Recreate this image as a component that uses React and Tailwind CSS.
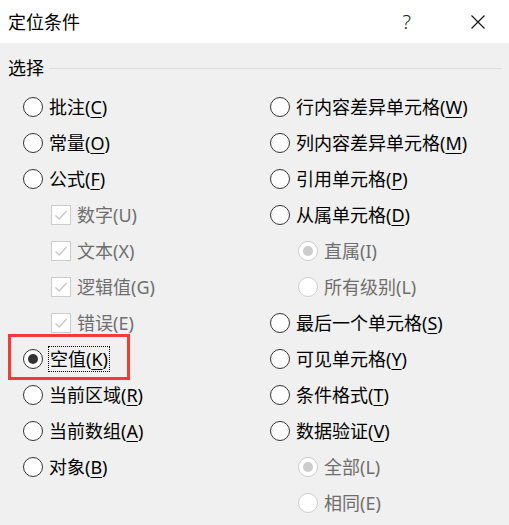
import React from "react";

const FONT = { fontFamily: '"Noto Sans", "Noto Sans CJK SC", sans-serif' };

function Radio({ checked, disabled }) {
  return (
    <span
      className={`flex h-[20px] w-[20px] shrink-0 items-center justify-center rounded-full border-[1.5px] bg-white ${
        disabled ? "border-[#cccccc]" : "border-[#333333]"
      }`}
    >
      {checked && (
        <span className={`h-[10px] w-[10px] rounded-full ${disabled ? "bg-[#cccccc]" : "bg-[#333333]"}`} />
      )}
    </span>
  );
}

function Check() {
  return (
    <span className="flex h-[20px] w-[20px] shrink-0 items-center justify-center border border-[#cccccc] bg-white">
      <svg width="14" height="14" viewBox="0 0 14 14">
        <path d="M1.5 7.5 L5.2 11 L12.5 3" fill="none" stroke="#c6c6c6" strokeWidth="1.3" />
      </svg>
    </span>
  );
}

function Label({ text, k, disabled, focus }) {
  const cls = disabled ? "text-[#6e6e6e]" : "text-black";
  const inner = (
    <>
      {text}(<span className={disabled ? "" : "underline underline-offset-[3px] decoration-1"}>{k}</span>)
    </>
  );
  if (focus) {
    return (
      <span className={`${cls} border border-dotted border-black px-[1px] leading-[25px]`}>{inner}</span>
    );
  }
  return <span className={`${cls} leading-[24px]`}>{inner}</span>;
}

function Row({ type, text, k, checked, disabled, indent, focus }) {
  return (
    <div className={`flex h-[36px] items-center ${indent ? "pl-[28px]" : ""}`}>
      {type === "check" ? <Check /> : <Radio checked={checked} disabled={disabled} />}
      <span className={focus ? "ml-[5px]" : "ml-[6px]"}>
        <Label text={text} k={k} disabled={disabled} focus={focus} />
      </span>
    </div>
  );
}

const left = [
  { text: "批注", k: "C" },
  { text: "常量", k: "O" },
  { text: "公式", k: "F" },
  { type: "check", text: "数字", k: "U", disabled: true, indent: true },
  { type: "check", text: "文本", k: "X", disabled: true, indent: true },
  { type: "check", text: "逻辑值", k: "G", disabled: true, indent: true },
  { type: "check", text: "错误", k: "E", disabled: true, indent: true },
  { text: "空值", k: "K", checked: true, focus: true },
  { text: "当前区域", k: "R" },
  { text: "当前数组", k: "A" },
  { text: "对象", k: "B" },
];

const right = [
  { text: "行内容差异单元格", k: "W" },
  { text: "列内容差异单元格", k: "M" },
  { text: "引用单元格", k: "P" },
  { text: "从属单元格", k: "D" },
  { text: "直属", k: "I", disabled: true, indent: true, checked: true },
  { text: "所有级别", k: "L", disabled: true, indent: true },
  { text: "最后一个单元格", k: "S" },
  { text: "可见单元格", k: "Y" },
  { text: "条件格式", k: "T" },
  { text: "数据验证", k: "V" },
  { text: "全部", k: "L", disabled: true, indent: true, checked: true },
  { text: "相同", k: "E", disabled: true, indent: true },
];

export default function App() {
  return (
    <div className="relative h-[525px] w-[509px] overflow-hidden bg-[#f0f0f0] text-[18px]" style={FONT}>
      <div className="flex h-[43px] items-center bg-white pl-[8px]">
        <span className="leading-[24px] text-black">定位条件</span>
        <span className="ml-auto mr-[60px] text-[20px] font-light leading-[24px] text-[#222]">?</span>
        <svg className="mr-[24px]" width="14" height="14" viewBox="0 0 14 14">
          <path d="M0.5 0.5 L13.5 13.5 M13.5 0.5 L0.5 13.5" stroke="#111" strokeWidth="1.1" />
        </svg>
      </div>
      <div className="flex items-center pl-[8px] pr-[7px] pt-[13px]">
        <span className="leading-[24px] text-black">选择</span>
        <div className="ml-[5px] h-px flex-1 bg-[#dcdcdc]" />
      </div>
      <div className="mt-[9px] flex pl-[23px]">
        <div className="w-[247px]">
          {left.map((r, i) => (
            <Row key={i} {...r} />
          ))}
        </div>
        <div className="flex-1">
          {right.map((r, i) => (
            <Row key={i} {...r} />
          ))}
        </div>
      </div>
      <div className="absolute left-[8px] top-[334px] h-[46px] w-[122px] border-[3px] border-[#f23a3a]" />
    </div>
  );
}
